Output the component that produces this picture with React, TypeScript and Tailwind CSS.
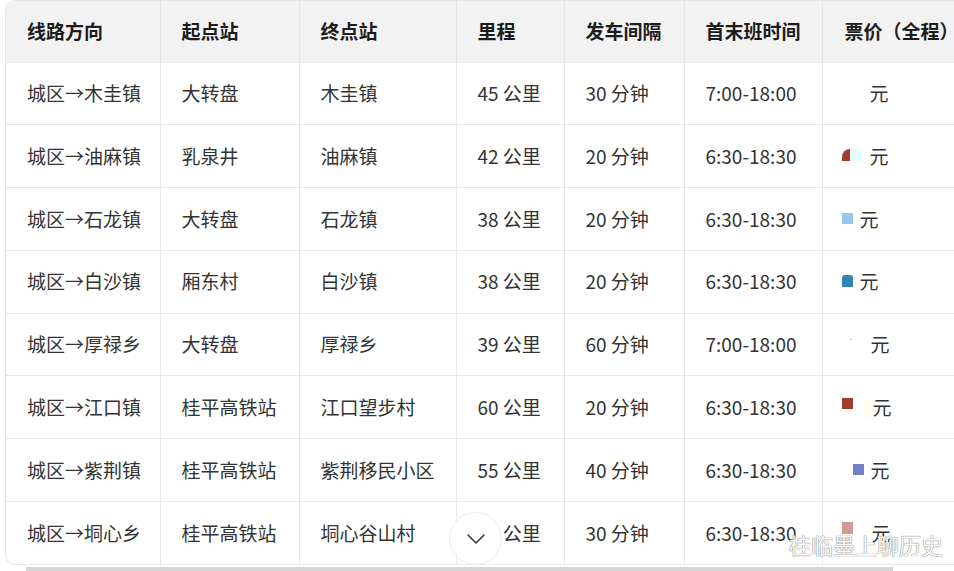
import React from "react";

type Row = {
  route: string;
  from: string;
  to: string;
  km: string;
  gap: string;
  time: string;
  mark: number;
};

const rows: Row[] = [
  { route: "城区→木圭镇", from: "大转盘", to: "木圭镇", km: "45 公里", gap: "30 分钟", time: "7:00-18:00", mark: 0 },
  { route: "城区→油麻镇", from: "乳泉井", to: "油麻镇", km: "42 公里", gap: "20 分钟", time: "6:30-18:30", mark: 1 },
  { route: "城区→石龙镇", from: "大转盘", to: "石龙镇", km: "38 公里", gap: "20 分钟", time: "6:30-18:30", mark: 2 },
  { route: "城区→白沙镇", from: "厢东村", to: "白沙镇", km: "38 公里", gap: "20 分钟", time: "6:30-18:30", mark: 3 },
  { route: "城区→厚禄乡", from: "大转盘", to: "厚禄乡", km: "39 公里", gap: "60 分钟", time: "7:00-18:00", mark: 4 },
  { route: "城区→江口镇", from: "桂平高铁站", to: "江口望步村", km: "60 公里", gap: "20 分钟", time: "6:30-18:30", mark: 5 },
  { route: "城区→紫荆镇", from: "桂平高铁站", to: "紫荆移民小区", km: "55 公里", gap: "40 分钟", time: "6:30-18:30", mark: 6 },
  { route: "城区→垌心乡", from: "桂平高铁站", to: "垌心谷山村", km: "50 公里", gap: "30 分钟", time: "6:30-18:30", mark: 7 },
];

// broken little image bits that sit in front of 元
const PriceMark = ({ mark }: { mark: number }) => {
  if (mark === 1)
    return (
      <span className="flex items-center mr-[7px] w-[21px] h-[13px] -mt-[2px]">
        <span className="w-[8px] h-[12px] bg-[#a33b2f] rounded-tl-[8px]" />
        <span className="w-[12px] h-[12px] bg-[#e2fbfb] rounded-tr-[8px]" />
      </span>
    );
  if (mark === 2) return <span className="mr-[7px] w-[11px] h-[11px] bg-[#95c9e9]" />;
  if (mark === 3) return <span className="mr-[7px] w-[11px] h-[12px] bg-[#2f86b0] rounded-t-[3px] -mt-[2px]" />;
  if (mark === 4) return <span className="mr-[19px] ml-[8px] w-[2px] h-[1px] bg-[#e0b080] -mt-[10px]" />;
  if (mark === 5)
    return (
      <span className="flex items-start mr-[-1px] h-[20px]">
        <span className="w-[11px] h-[11px] bg-[#a23c30] mt-[1px]" />
        <span className="ml-[11px] w-[10px] h-[18px] bg-[#fffdf0] mt-[3px]" />
      </span>
    );
  if (mark === 6) return <span className="ml-[11px] mr-[7px] w-[11px] h-[11px] bg-[#7080c2]" />;
  if (mark === 7) return <span className="mr-[19px] w-[11px] h-[12px] bg-[#c9a08a] -mt-[10px]" />;
  return <span className="w-[28px]" />;
};

export default function App() {
  const th = "text-left font-bold text-[#1c1c1c] pl-[21px] border-r border-[#e4e4e4] whitespace-nowrap";
  const td = "pl-[21px] border-r border-t border-[#e8e8e8] whitespace-nowrap";
  return (
    <div
      className="w-[954px] h-[571px] overflow-hidden bg-white relative"
      style={{ fontFamily: '"Noto Sans CJK SC", "Noto Sans", sans-serif' }}
    >
      <div className="ml-[5px] w-[1100px] border border-[#e6e6e6] rounded-[10px] overflow-hidden">
        <table className="border-collapse text-[19px] text-[#333] table-fixed">
          <colgroup>
            <col className="w-[154px]" />
            <col className="w-[139px]" />
            <col className="w-[157px]" />
            <col className="w-[108px]" />
            <col className="w-[120px]" />
            <col className="w-[138px]" />
            <col className="w-[200px]" />
          </colgroup>
          <thead>
            <tr className="h-[61px] bg-[#f2f2f2]">
              <th className={th}>线路方向</th>
              <th className={th}>起点站</th>
              <th className={th}>终点站</th>
              <th className={th}>里程</th>
              <th className={th}>发车间隔</th>
              <th className={th}>首末班时间</th>
              <th className="text-left font-bold text-[#1c1c1c] pl-[22px] whitespace-nowrap">票价（全程）</th>
            </tr>
          </thead>
          <tbody>
            {rows.map((r) => (
              <tr key={r.route} className="h-[62.75px]">
                <td className={td}>{r.route}</td>
                <td className={td}>{r.from}</td>
                <td className={td}>{r.to}</td>
                <td className={td}>{r.km}</td>
                <td className={td}>{r.gap}</td>
                <td className={td}>{r.time}</td>
                <td className="pl-[19px] border-t border-[#e8e8e8]">
                  <div className="flex items-center">
                    <PriceMark mark={r.mark} />
                    <span>元</span>
                  </div>
                </td>
              </tr>
            ))}
          </tbody>
        </table>
      </div>
      <div className="ml-[26px] mt-[2px] w-[867px] h-[4px] bg-[#d6d6d6]" />

      {/* scroll-down button */}
      <div className="absolute left-[449px] top-[512px] w-[53px] h-[53px] rounded-full bg-white border border-[#ececec] flex items-center justify-center">
        <svg width="18" height="10" viewBox="0 0 18 10" fill="none" className="mt-[1px]">
          <path d="M1 1l8 8 8-8" stroke="#333" strokeWidth="1.6" strokeLinecap="round" strokeLinejoin="round" />
        </svg>
      </div>

      {/* watermark */}
      <div className="absolute left-[789px] top-[530px] text-[22px] leading-[28px] text-white [text-shadow:0_0_1px_#777,0_0_1px_#777]">
        桂临墨上聊历史
      </div>
    </div>
  );
}
